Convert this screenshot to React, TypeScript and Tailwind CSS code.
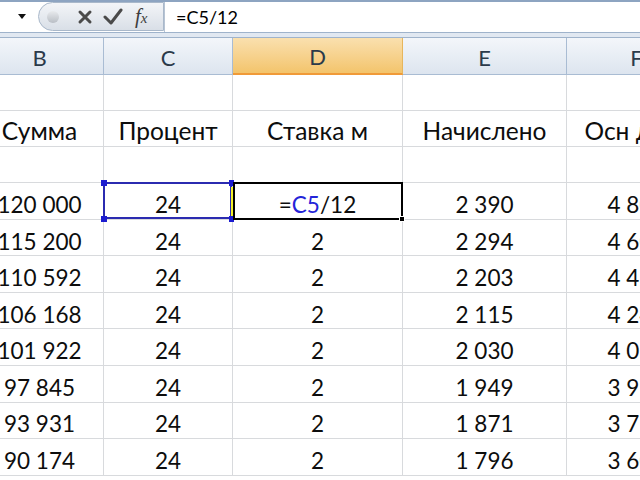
import React from "react";

const cols = [
  { w: "w-[128px]", key: "B" },
  { w: "w-[129px]", key: "C" },
  { w: "w-[170px]", key: "D" },
  { w: "w-[164px]", key: "E" },
  { w: "w-[140px]", key: "F" },
];

const data: string[][] = [
  ["120 000", "24", "", "2 390", "4 800"],
  ["115 200", "24", "2", "2 294", "4 608"],
  ["110 592", "24", "2", "2 203", "4 424"],
  ["106 168", "24", "2", "2 115", "4 247"],
  ["101 922", "24", "2", "2 030", "4 077"],
  ["97 845", "24", "2", "1 949", "3 914"],
  ["93 931", "24", "2", "1 871", "3 757"],
  ["90 174", "24", "2", "1 796", "3 607"],
];

const labels = ["Сумма", "Процент", "Ставка м", "Начислено", "Осн долг"];

function Cell({ w, pt, children }: { w: string; pt: string; children?: React.ReactNode }) {
  return (
    <div
      className={`${w} ${pt} shrink-0 h-full border-r border-b border-[#d8dadd] flex items-center justify-center whitespace-nowrap overflow-hidden`}
    >
      {children}
    </div>
  );
}

export default function App() {
  return (
    <div
      className="w-[640px] h-[480px] overflow-hidden bg-white text-[#0d0d0d]"
      style={{ fontFamily: "Lato, 'Open Sans', sans-serif" }}
    >
      {/* formula bar */}
      <div className="h-[32px] flex border-t-2 border-[#8da4c1] bg-white">
        <div className="w-[38px] shrink-0 flex items-center justify-center pl-[6px]">
          <svg width="8" height="6" viewBox="0 0 8 6">
            <path d="M0 0 H8 L4 5 Z" fill="#111" />
          </svg>
        </div>
        <div className="w-[126px] shrink-0 h-[29px] rounded-l-[16px] border border-[#a9b8ca] bg-gradient-to-b from-[#f3f5f8] to-[#d9dfe7] flex items-center">
          <div className="w-[12px] h-[12px] rounded-full bg-gradient-to-b from-[#e8eaed] to-[#b9bec5] ml-[8px]" />
          <svg className="ml-[18px]" width="16" height="16" viewBox="0 0 16 16">
            <path d="M3 3 L13 13 M13 3 L3 13" stroke="#4a4a4a" strokeWidth="3" strokeLinecap="round" />
          </svg>
          <svg className="ml-[10px]" width="20" height="18" viewBox="0 0 20 18">
            <path d="M2 9 L8 15 L18 2" stroke="#4a4a4a" strokeWidth="3" fill="none" strokeLinejoin="round" strokeLinecap="round" />
          </svg>
          <span
            className="ml-[12px] text-[21px] italic text-[#3d3d3d] leading-none"
            style={{ fontFamily: "'Liberation Serif', serif" }}
          >
            f<span className="text-[15px]">x</span>
          </span>
        </div>
        <div className="flex-1 h-[30px] border-l border-[#b7c4d4] flex items-center pl-[11px] text-[18px] text-black">
          =C5/12
        </div>
      </div>
      {/* strip */}
      <div className="h-[6px] border-t border-b border-[#9fb3cb] bg-[#e1e8f1]" />
      {/* grid */}
      <div className="-ml-[24px]">
        {/* header */}
        <div className="flex h-[37px]">
          {cols.map((c) =>
            c.key === "D" ? (
              <div
                key={c.key}
                className={`${c.w} shrink-0 h-full pt-[2px] border-r border-b-2 border-r-[#e7b65c] border-b-[#f09a38] bg-gradient-to-b from-[#fae0ae] to-[#f3c46b] flex items-center justify-center text-[22px] text-[#2b3a4a]`}
              >
                {c.key}
              </div>
            ) : (
              <div
                key={c.key}
                className={`${c.w} shrink-0 h-full pt-[2px] border-r border-b border-[#a9bcd3] bg-gradient-to-b from-[#f3f6fa] to-[#dde5ef] flex items-center justify-center text-[22px] text-[#2b3a4a]`}
              >
                {c.key}
              </div>
            )
          )}
        </div>
        {/* empty row */}
        <div className="flex h-[36px]">
          {cols.map((c) => (
            <Cell key={c.key} w={c.w} pt="pt-[0px]" />
          ))}
        </div>
        {/* labels */}
        <div className="flex h-[36px] text-[24.5px]">
          {cols.map((c, i) => (
            <Cell key={c.key} w={c.w} pt="pt-[5px]">
              {labels[i]}
            </Cell>
          ))}
        </div>
        <div className="flex h-[36px]">
          {cols.map((c) => (
            <Cell key={c.key} w={c.w} pt="pt-[0px]" />
          ))}
        </div>
        {data.map((row, r) => (
          <div key={r} className="flex h-[36.6px] text-[22.5px]">
            {cols.map((c, i) => {
              if (r === 0 && i === 1) {
                return (
                  <div
                    key={c.key}
                    className={`${c.w} shrink-0 h-full pt-[8px] relative border-r border-b border-[#d8dadd] flex items-center justify-center`}
                  >
                    {row[i]}
                    <div className="absolute -left-[1px] -top-[1px] right-[0px] bottom-[0px] border-2 border-[#2b2bb0]" />
                    <div className="absolute -left-[3px] -top-[3px] w-[6px] h-[6px] bg-[#1c1cd0]" />
                    <div className="absolute -left-[3px] -bottom-[3px] w-[6px] h-[6px] bg-[#1c1cd0]" />
                    <div className="absolute -right-[2px] -top-[3px] w-[5px] h-[6px] bg-[#1c1cd0]" />
                    <div className="absolute -right-[2px] -bottom-[3px] w-[5px] h-[6px] bg-[#1c1cd0]" />
                    <div className="absolute -right-[1px] top-[4px] bottom-[3px] w-[2px] bg-[#f2ee2a]" />
                  </div>
                );
              }
              if (r === 0 && i === 2) {
                return (
                  <div
                    key={c.key}
                    className={`${c.w} shrink-0 h-full pt-[8px] relative border-r border-b border-[#d8dadd] flex items-center justify-center`}
                  >
                    <span>
                      =<span className="text-[#2424d8]">C5</span>/12
                    </span>
                    <div className="absolute left-[0px] -top-[1px] right-[-1px] bottom-[-1px] border-2 border-black" />
                    <div className="absolute -right-[3px] -bottom-[3px] w-[6px] h-[6px] bg-black border border-white" />
                  </div>
                );
              }
              return (
                <Cell key={c.key} w={c.w} pt="pt-[8px]">
                  {row[i]}
                </Cell>
              );
            })}
          </div>
        ))}
      </div>
    </div>
  );
}
